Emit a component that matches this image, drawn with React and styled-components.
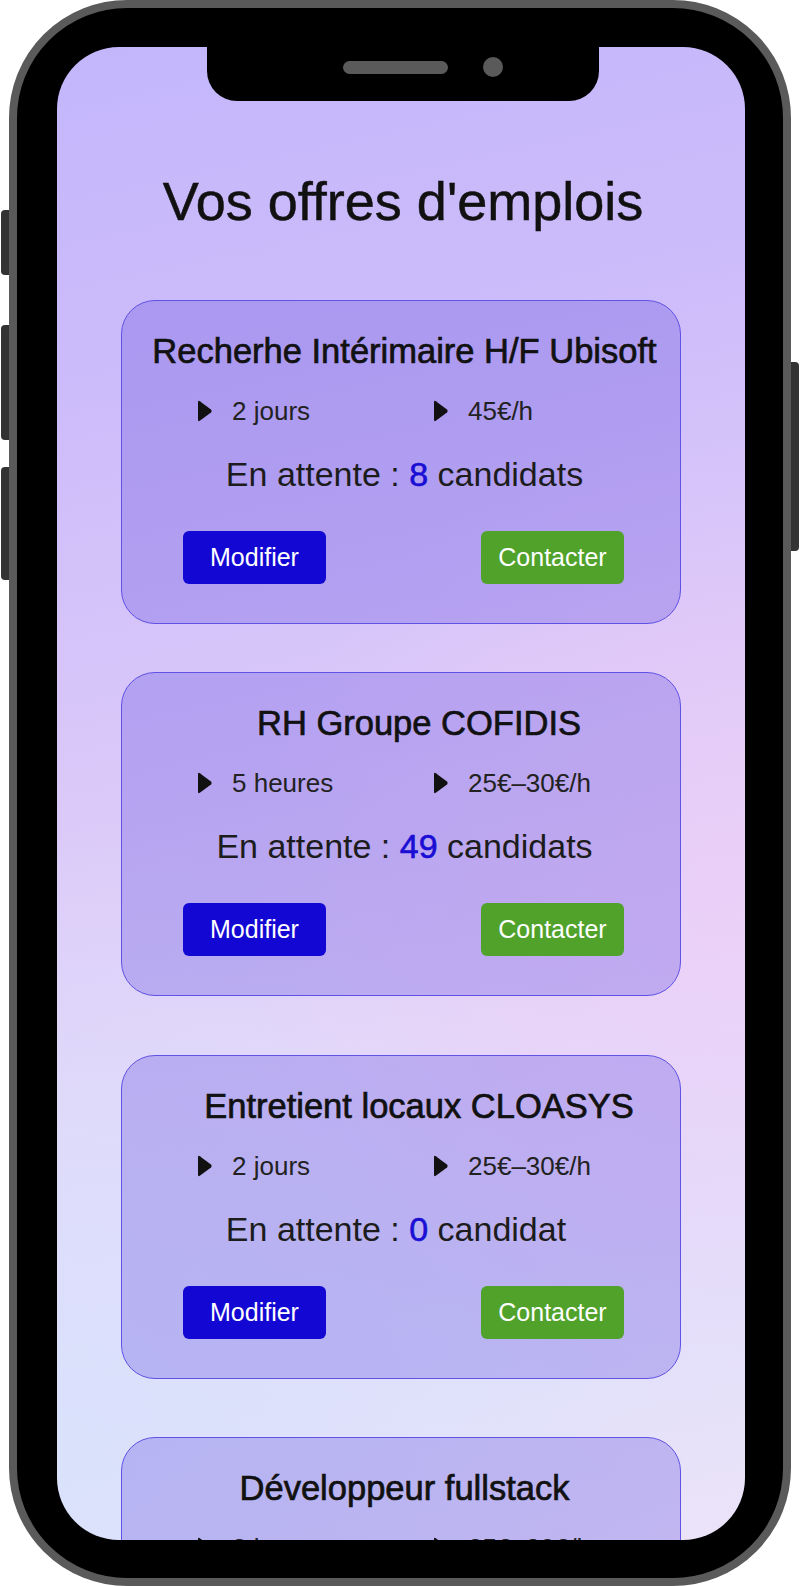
import React from "react";
import styled, { createGlobalStyle } from "styled-components";

const GlobalStyle = createGlobalStyle`
  html, body {
    margin: 0;
    padding: 0;
    background: #ffffff;
  }
  body {
    font-family: "Liberation Sans", Arial, sans-serif;
  }
`;

// the device mockup around the app screen
const Stage = styled.div`
  display: flex;
  width: 801px;
  height: 1586px;
  padding-left: 9px;
  box-sizing: border-box;
`;

const Phone = styled.div`
  position: relative;
  width: 782px;
  height: 1586px;
  box-sizing: border-box;
  border: 8px solid #5a5a5a;
  border-radius: 118px;
  background: #000;
  padding: 39px 38px 38px 40px;
`;

/* hardware buttons sit over the frame edge */
const SideButton = styled.div`
  position: absolute;
  top: ${({ $top }) => $top}px;
  height: ${({ $height }) => $height}px;
  width: 8px;
  background: #333;
  ${({ $right }) =>
    $right
      ? "right: -16px; border-radius: 0 4px 4px 0;"
      : "left: -16px; border-radius: 4px 0 0 4px;"}
`;

const Screen = styled.div`
  position: relative;
  height: 100%;
  border-radius: 62px;
  overflow: hidden;
  background:
    radial-gradient(circle at 100% 58%, rgba(242, 205, 246, 0.55), transparent 45%),
    radial-gradient(circle at 0% 95%, rgba(214, 226, 252, 0.7), transparent 40%),
    linear-gradient(168deg, #c3b6fb 0%, #cdbcfa 22%, #dac8f9 45%, #e3d6f9 65%, #e2e0fb 85%, #ebe3f8 100%);
`;

const Notch = styled.div`
  position: absolute;
  top: 0;
  left: 150px;
  width: 392px;
  height: 54px;
  background: #000;
  border-radius: 0 0 30px 30px;
  display: flex;
  padding-left: 136px;
  box-sizing: border-box;
  z-index: 5;
`;

const NotchRow = styled.div`
  display: flex;
  align-items: center;
  gap: 35px;
  height: 40px;
`;

const Speaker = styled.div`
  width: 105px;
  height: 13px;
  border-radius: 7px;
  background: #5a5a5a;
`;

const Camera = styled.div`
  width: 20px;
  height: 20px;
  border-radius: 50%;
  background: #5a5a5a;
`;

const Content = styled.div`
  padding-top: 123px;
`;

const PageTitle = styled.h1`
  margin: 0;
  padding-left: 4px;
  text-align: center;
  font-size: 54px;
  line-height: 62px;
  font-weight: normal;
  -webkit-text-stroke: 0.5px #111;
  color: #111;
`;

const CardList = styled.div`
  display: flex;
  flex-direction: column;
  align-items: center;
  margin-top: 68px;
`;

const Card = styled.div`
  width: 560px;
  box-sizing: border-box;
  border: 1px solid #5f52e4;
  border-radius: 34px;
  background: rgba(92, 72, 222, 0.29);
  padding: 30px 0 39px;
  margin-bottom: ${({ $spacing }) => $spacing}px;
`;

const CardTitle = styled.h2`
  margin: 0;
  padding-left: ${({ $indent }) => 7 + $indent}px;
  text-align: center;
  font-size: 34.5px;
  line-height: 40px;
  font-weight: normal;
  -webkit-text-stroke: 0.7px #111;
  color: #111;
  white-space: nowrap;
`;

const Meta = styled.div`
  display: grid;
  grid-template-columns: 236px auto;
  padding-left: 75px;
  margin-top: 25px;
`;

const MetaItem = styled.div`
  display: flex;
  align-items: center;
  gap: 20px;
  font-size: 26px;
  line-height: 30px;
  color: #222;
`;

const Waiting = styled.p`
  margin: 28px 0 0;
  padding-left: 7px;
  text-align: center;
  font-size: 34px;
  line-height: 40px;
  color: #1c1c1c;
`;

const Count = styled.span`
  color: #1a0ed4;
  -webkit-text-stroke: 0.6px #1a0ed4;
`;

const Ghost = styled.span`
  visibility: hidden;
`;

const Actions = styled.div`
  display: flex;
  justify-content: space-between;
  padding: 0 56px 0 61px;
  margin-top: 37px;
`;

const Button = styled.button`
  width: 143px;
  height: 53px;
  border: 0;
  border-radius: 6px;
  background: ${({ $variant }) => ($variant === "edit" ? "#1308d3" : "#50a22b")};
  color: #fff;
  font-family: "Liberation Sans", Arial, sans-serif;
  font-size: 25px;
  padding: 0;
  cursor: pointer;
`;

const Caret = () => (
  <svg width="15" height="22" viewBox="0 0 15 22">
    <path
      d="M1 2.2 Q1 0 2.8 1.3 L14 9.6 Q15.2 11 14 12.4 L2.8 20.7 Q1 22 1 19.8 Z"
      fill="#111"
    />
  </svg>
);

const offers = [
  { title: "Recherhe Intérimaire H/F Ubisoft", duration: "2 jours", pay: "45€/h", waiting: 8, indent: 0, spacing: 48 },
  { title: "RH Groupe COFIDIS", duration: "5 heures", pay: "25€–30€/h", waiting: 49, indent: 29, spacing: 59 },
  { title: "Entretient locaux CLOASYS", duration: "2 jours", pay: "25€–30€/h", waiting: 0, indent: 29, spacing: 58 },
  { title: "Développeur fullstack", duration: "2 jours", pay: "25€–30€/h", waiting: 3, indent: 0, spacing: 40 },
];

function OfferCard({ offer }) {
  const plural = offer.waiting > 1;
  return (
    <Card $spacing={offer.spacing}>
      <CardTitle $indent={offer.indent}>{offer.title}</CardTitle>
      <Meta>
        <MetaItem>
          <Caret />
          {offer.duration}
        </MetaItem>
        <MetaItem>
          <Caret />
          {offer.pay}
        </MetaItem>
      </Meta>
      <Waiting>
        En attente : <Count>{offer.waiting}</Count> candidat
        {plural ? "s" : <Ghost>s</Ghost>}
      </Waiting>
      <Actions>
        <Button $variant="edit">Modifier</Button>
        <Button $variant="contact">Contacter</Button>
      </Actions>
    </Card>
  );
}

export default function App() {
  return (
    <>
      <GlobalStyle />
      <Stage>
        <Phone>
          <SideButton $top={202} $height={65} />
          <SideButton $top={317} $height={115} />
          <SideButton $top={459} $height={113} />
          <SideButton $right $top={354} $height={189} />
          <Screen>
            <Notch>
              <NotchRow>
                <Speaker />
                <Camera />
              </NotchRow>
            </Notch>
            <Content>
              <PageTitle>Vos offres d'emplois</PageTitle>
              <CardList>
                {offers.map((offer) => (
                  <OfferCard key={offer.title} offer={offer} />
                ))}
              </CardList>
            </Content>
          </Screen>
        </Phone>
      </Stage>
    </>
  );
}
